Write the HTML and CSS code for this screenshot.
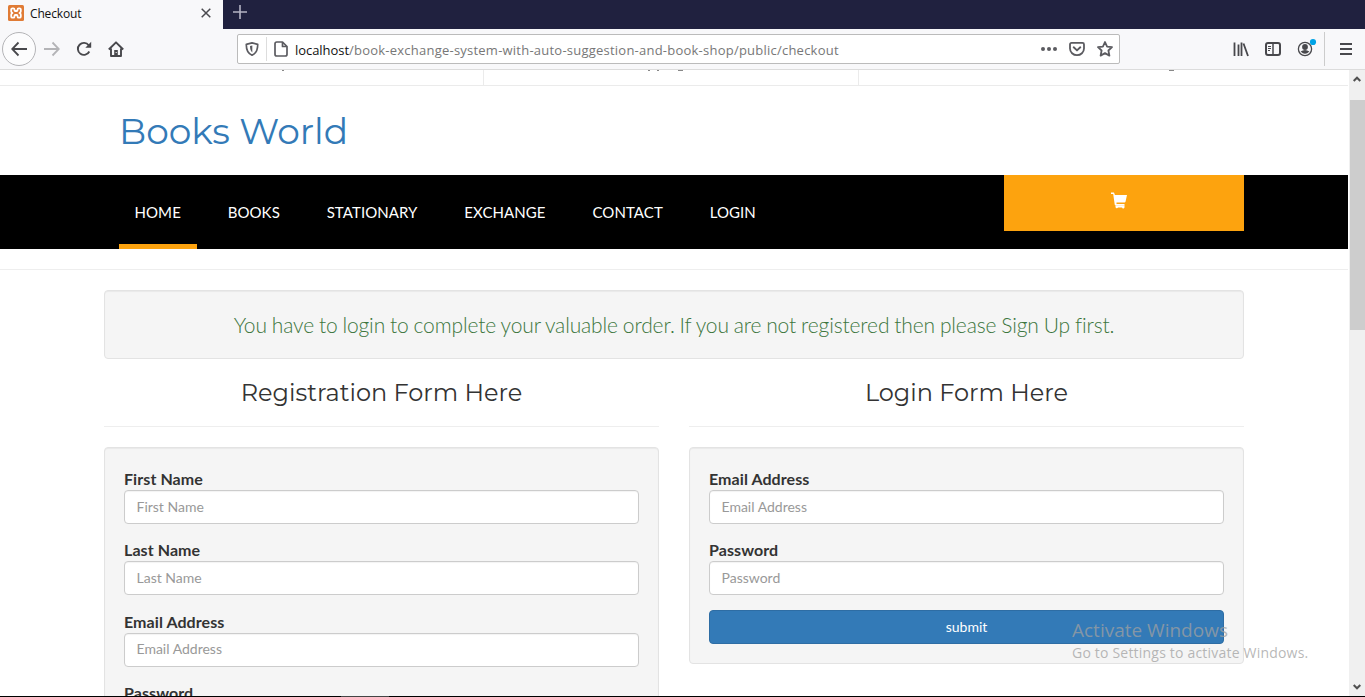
FILE: index.html
```
<!DOCTYPE html>
<html lang="en">
<head>
<meta charset="utf-8">
<title>Checkout</title>
<link rel="stylesheet" href="styles.css">
</head>
<body>
<div class="browser">
  <div class="tabs">
    <div class="tab">
      <svg class="favicon" width="16" height="16" viewBox="0 0 16 16"><rect width="16" height="16" rx="1.5" fill="#e07b35"/><path d="M3.200 6.500V4.600A1.300 1.300 0 0 1 4.500 3.300H5.200Q6.500 3.300 6.500 4.600V5.200Q6.500 6 7.300 6H8.700Q9.500 6 9.500 5.200V4.600Q9.500 3.300 10.800 3.300H11.500A1.300 1.300 0 0 1 12.800 4.600V6.200Q12.800 7.300 11.500 8 12.800 8.700 12.800 9.800V11.400A1.300 1.300 0 0 1 11.500 12.700H10.800Q9.500 12.700 9.500 11.400V10.800Q9.500 10 8.700 10H7.300Q6.500 10 6.500 10.800V11.400Q6.500 12.700 5.200 12.700H4.500A1.300 1.300 0 0 1 3.200 11.400V9.800Q3.200 8.700 4.500 8 3.200 7.300 3.200 6.200" fill="none" stroke="#fff" stroke-width="1.800" stroke-linejoin="round"/></svg>
      <span class="tab-title">Checkout</span>
      <svg class="tab-close" width="10" height="10" viewBox="0 0 10 10"><path d="M.7.7 9.300 9.300M9.300.7.7 9.300" stroke="#4a4a4f" stroke-width="1.500"/></svg>
    </div>
    <svg class="new-tab" width="14" height="14" viewBox="0 0 14 14"><path d="M7 0V14M0 7H14" stroke="#b4b4c4" stroke-width="1.600"/></svg>
  </div>
  <div class="toolbar">
    <div class="nav-buttons">
      <span class="back"><svg width="16" height="16" viewBox="0 0 16 16"><path d="M16 8H1.500M7.500 1.500 1.200 8l6.300 6.500" fill="none" stroke="#48484c" stroke-width="1.800"/></svg></span>
      <svg width="16" height="16" viewBox="0 0 16 16"><path d="M0 8H14.500M8.500 1.500 14.800 8l-6.300 6.500" fill="none" stroke="#b4b4b7" stroke-width="1.800"/></svg>
      <svg width="16" height="16" viewBox="0 0 16 16"><path d="M13.300 10.500A6 6 0 1 1 12.700 4.300" fill="none" stroke="#48484c" stroke-width="1.900"/><path d="M15.200.8V6.700H9.300Z" fill="#48484c"/></svg>
      <svg width="16" height="16" viewBox="0 0 16 16"><path d="M.8 8.500 8 1.300l7.200 7.200M3 7.500V15H13V7.500" fill="none" stroke="#48484c" stroke-width="1.900" stroke-linejoin="round"/><path d="M6.200 14V9h3.600v5" fill="#48484c"/><path d="M8.200 11v1" stroke="#fff"/></svg>
    </div>
    <div class="urlbar">
      <span class="shield"><svg width="14" height="14" viewBox="0 0 14 14"><path d="M7 .9 12.700 2.300C12.800 7.600 11.500 11.300 7 13.200 2.500 11.300 1.200 7.600 1.300 2.300Z" fill="none" stroke="#5b5b60" stroke-width="1.700" stroke-linejoin="round"/><path d="M7.300 3.500 5 4C5 7 5.600 9 7.300 10.400Z" fill="#5b5b60"/></svg></span>
      <svg class="doc" width="14" height="16" viewBox="0 0 14 16"><path d="M2.800 1H8.500L13 5.500V13.200Q13 15 11.200 15H2.800Q1 15 1 13.200V2.800Q1 1 2.800 1ZM8.500 1V5.500H13" fill="none" stroke="#5b5b60" stroke-width="1.700" stroke-linejoin="round"/></svg>
      <span class="url"><span class="host">localhost</span>/book-exchange-system-with-auto-suggestion-and-book-shop/public/checkout</span>
      <div class="url-actions">
        <svg width="16" height="16" viewBox="0 0 16 16"><g fill="#5b5b60"><circle cx="2" cy="8" r="2"/><circle cx="8" cy="8" r="2"/><circle cx="14" cy="8" r="2"/></g></svg>
        <svg width="16" height="16" viewBox="0 0 16 16"><path d="M2.500 1.900H13.500Q15 1.900 15 3.400V7.500A7 6.700 0 0 1 1 7.500V3.400Q1 1.900 2.500 1.900Z" fill="none" stroke="#5b5b60" stroke-width="1.800"/><path d="M4.700 6.300 8 9.400l3.300-3.100" fill="none" stroke="#5b5b60" stroke-width="1.900" stroke-linecap="round" stroke-linejoin="round"/></svg>
        <svg width="16" height="16" viewBox="0 0 16 16"><path d="M8 1 10.100 5.600 15 6.200 11.400 9.500 12.400 14.600 8 12.100 3.600 14.600 4.600 9.500 1 6.200 5.900 5.600Z" fill="none" stroke="#5b5b60" stroke-width="1.800" stroke-linejoin="round"/></svg>
      </div>
    </div>
    <div class="tools">
      <svg width="16" height="16" viewBox="0 0 16 16"><path d="M1.500 1.500V15M5.500 3.500V15M8.500 1.500V15M10.500 2.500 15 15" fill="none" stroke="#48484c" stroke-width="1.800"/></svg>
      <svg width="16" height="16" viewBox="0 0 16 16"><rect x="1" y="2" width="14" height="12" rx="2" fill="none" stroke="#48484c" stroke-width="2"/><path d="M8 2V14" stroke="#48484c" stroke-width="1.500"/><path d="M3 5.500H6M3 7.500H6M3 9.500H5" stroke="#48484c"/></svg>
      <svg class="account" width="20" height="20" viewBox="0 0 20 20"><circle cx="8" cy="12" r="6.600" fill="none" stroke="#48484c" stroke-width="1.300"/><circle cx="8" cy="10" r="2.900" fill="#48484c"/><path d="M3.600 14.500Q8 11.500 12.400 14.500 8 19 3.600 14.500Z" fill="#48484c"/><circle cx="16" cy="5" r="3.100" fill="#00a3e6"/></svg>
      <span class="menu"><svg width="12" height="12" viewBox="0 0 12 12"><path d="M0 1H12M0 6H12M0 11H12" stroke="#48484c" stroke-width="1.800"/></svg></span>
    </div>
  </div>
  <div class="viewport">
    <div class="page">
      <div class="infobar">
        <div class="info-cell info-first"><svg width="4" height="1"><rect x="1" width="2" height="1" fill="#888"/></svg></div>
        <div class="info-cell info-mid"><svg width="38" height="1"><path d="M1 .5h2M10 .5h2M31 .5h5" stroke="#888"/></svg></div>
        <div class="info-cell info-last"><svg width="6" height="1"><rect width="5" height="1" fill="#888"/></svg></div>
      </div>
      <div class="brand">Books World</div>
      <nav class="mainnav">
        <div class="links">
          <a class="active">HOME</a><a>BOOKS</a><a>STATIONARY</a><a>EXCHANGE</a><a>CONTACT</a><a>LOGIN</a>
        </div>
        <div class="cart"><svg width="16" height="17" viewBox="0 0 16 17"><path d="M0 .5H3L3.900 3H16L14.500 9.800Q14.300 10.500 13.500 10.500H5.500V12H13.500V13.300H4.500Q3.700 13.300 3.700 12.500L2.200 2H0Z" fill="#fff"/><path d="M4.500 13.300H13.500V14.800A1 1 0 0 1 11 15.500H7A1.300 1.300 0 0 1 4.500 15Z" fill="#fff"/></svg></div>
      </nav>
      <div class="rule"></div>
      <main class="container">
        <div class="well notice">You have to login to complete your valuable order. If you are not registered then please Sign Up first.</div>
        <div class="columns">
          <section>
            <h3 class="heading">Registration Form Here</h3>
            <form class="well form tall">
              <label>First Name</label><input placeholder="First Name">
              <label>Last Name</label><input placeholder="Last Name">
              <label>Email Address</label><input placeholder="Email Address">
              <label>Password</label><input placeholder="Password">
            </form>
          </section>
          <section>
            <h3 class="heading">Login Form Here</h3>
            <form class="well form">
              <label>Email Address</label><input placeholder="Email Address">
              <label>Password</label><input placeholder="Password">
              <button type="button">submit</button>
            </form>
          </section>
        </div>
      </main>
    </div>
    <div class="scrollbar">
      <svg width="8" height="6" viewBox="0 0 8 6"><path d="M.7 5 4 1.700 7.300 5" fill="none" stroke="#505050" stroke-width="2"/></svg>
      <div class="thumb"></div>
      <svg width="8" height="6" viewBox="0 0 8 6"><path d="M.7 1 4 4.300 7.300 1" fill="none" stroke="#505050" stroke-width="2"/></svg>
    </div>
  </div>
  <div class="edge"><span></span></div>
  <div class="watermark"><div class="wm-title">Activate Windows</div><div class="wm-sub">Go to Settings to activate Windows.</div></div>
</div>
</body>
</html>
```
FILE: styles.css
```
* { box-sizing: border-box; }
body { margin: 0; overflow: hidden; background: #fff; font-family: Lato, sans-serif; color: #333; }
svg { display: block; flex: none; }
.browser { position: relative; width: 1365px; height: 697px; display: flex; flex-direction: column; overflow: hidden; }

.tabs { height: 29px; flex: none; display: flex; background: #20213f; font-family: "Open Sans", "Noto Sans", sans-serif; }
.tab { width: 223px; background: #f8f8fa; display: flex; align-items: center; padding: 0 12px 3px 8px; }
.tab-title { margin-left: 6px; font-size: 12px; letter-spacing: -0.15px; color: #111; flex: 1; }
.new-tab { margin: 5px 0 0 10px; }

.toolbar { height: 41px; flex: none; display: flex; align-items: center; background: #f8f8fa; border-bottom: 1px solid #dcdcdc; padding-left: 2px; }
.nav-buttons { width: 235px; display: flex; align-items: center; gap: 16px; }
.back { width: 34px; height: 34px; margin-right: -8px; border: 1px solid #b4b4b7; border-radius: 50%; background: #fcfcfd; display: flex; align-items: center; justify-content: center; }
.urlbar { width: 883px; height: 30px; border: 1px solid #bbb; border-radius: 2px; background: #fff; display: flex; align-items: center; }
.shield { height: 24px; width: 29px; padding-left: 7px; border-right: 1px solid #ddd; display: flex; align-items: center; }
.doc { margin-left: 7px; }
.url { margin: 1px 0 0 7px; flex: 1; font: 13px "Open Sans", "Noto Sans", sans-serif; letter-spacing: 0.23px; color: #777; white-space: nowrap; }
.host { color: #111; letter-spacing: -0.05px; }
.url-actions { display: flex; gap: 12px; margin-right: 6px; }
.tools { flex: 1; display: flex; align-items: center; padding-left: 113px; }
.tools > svg { margin-right: 16px; }
.tools > .account { margin: -4px 7px 0 0; }
.menu { height: 34px; border-left: 1px solid #ccc; padding-left: 15px; display: flex; align-items: center; }

.viewport { height: 626px; flex: none; display: flex; }
.page { width: 1348px; height: 626px; overflow: hidden; }
.infobar { height: 16px; border-bottom: 1px solid #ebebeb; display: flex; }
.info-cell { border-right: 1px solid #ebebeb; }
.info-first { width: 484px; padding-left: 281px; }
.info-mid { width: 375px; padding-left: 163px; }
.info-last { flex: 1; border-right: 0; padding-left: 310px; }
.brand { height: 89px; padding: 20px 0 0 119px; font: 400 36px/50px Montserrat, Inter, sans-serif; color: #337ab7; }
.mainnav { height: 74px; background: #000; padding: 0 104px 0 119px; display: flex; justify-content: space-between; align-items: flex-start; }
.links { display: flex; gap: 15.300px; }
.links a { height: 74px; padding: 0 16px 0 15.500px; border-bottom: 5px solid transparent; color: #fff; font-size: 15px; letter-spacing: 0.08px; line-height: 75px; white-space: nowrap; }
.links .active { border-color: #fda30e; }
.cart { width: 240px; height: 56px; background: #fda30e; display: flex; justify-content: center; padding: 17px 10px 0 0; }
.rule { height: 21px; border-bottom: 1px solid #eee; }
.container { margin: 20px 104px 0; }
.well { background: #f5f5f5; border: 1px solid #e3e3e3; border-radius: 4px; box-shadow: inset 0 1px 1px rgba(0,0,0,.05); }
.notice { height: 69px; text-align: center; font-size: 21px; font-weight: 300; letter-spacing: -0.12px; word-spacing: -0.7px; line-height: 67px; color: #3c763d; white-space: nowrap; }
.columns { display: grid; grid-template-columns: 555px 555px; gap: 30px; }
.heading { height: 68px; margin: 0 0 20px; border-bottom: 1px solid #eee; font: 400 24px/68px Montserrat, Inter, sans-serif; text-align: center; color: #333; white-space: nowrap; }
.form { padding: 20px 19px 19px; height: 217px; display: flex; flex-direction: column; }
.tall { height: 310px; }
.form label { font-size: 16px; font-weight: 700; line-height: 21px; height: 22px; letter-spacing: 0.08px; flex: none; }
.form input { height: 34px; flex: none; margin: 0 0 15.400px; padding: 5px 12px 7px 11.500px; border: 1px solid #ccc; border-radius: 4px; background: #fff; font: 14px Lato, sans-serif; box-shadow: inset 0 1px 1px rgba(0,0,0,.05); }
.form input::placeholder { color: #999; opacity: 1; }
.form button { height: 34px; margin-top: -0.800px; flex: none; border: 1px solid #2e6da4; border-radius: 4px; background: #337ab7; color: #fff; font: 14px Lato, sans-serif; }

.scrollbar { width: 17px; background: #f0f0f0; border-left: 1px solid #fff; display: flex; flex-direction: column; align-items: center; padding: 6px 0; }
.thumb { width: 15px; height: 230px; margin: 18px 0 auto; background: #cdcdcd; }
.edge { height: 1px; background: #000; padding-left: 341px; }
.edge span { display: block; width: 48px; height: 1px; background: #444; }
.watermark { position: absolute; left: 1072px; top: 617px; font-family: "Open Sans", "Noto Sans", sans-serif; color: rgba(160,160,160,.75); white-space: nowrap; }
.wm-title { font-size: 19px; line-height: 26px; }
.wm-sub { font-size: 14px; line-height: 20px; letter-spacing: 0.2px; }
```
